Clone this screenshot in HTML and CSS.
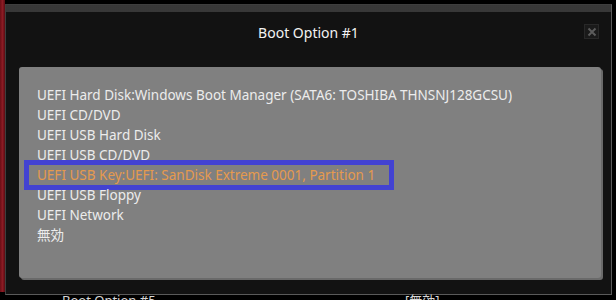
FILE: index.html
```html
<!DOCTYPE html>
<html lang="ja">
<head>
<meta charset="utf-8">
<title>Boot Option #1</title>
<link rel="stylesheet" href="styles.css">
</head>
<body>
<div class="screen">
  <div class="side-strip"></div>
  <div class="stage">
    <div class="dialog">
      <div class="dots"></div>
      <div class="header">
        <span class="spacer"></span>
        <h1 class="title">Boot Option #1</h1>
        <span class="close"><svg width="10" height="10" viewBox="0 0 10 10"><path d="M1.5 1.5L8.5 8.5M8.5 1.5L1.5 8.5" stroke="#5c5c5c" stroke-width="2"/></svg></span>
      </div>
      <div class="panel">
        <div class="item">UEFI Hard Disk:Windows Boot Manager (SATA6: TOSHIBA THNSNJ128GCSU)</div>
        <div class="item">UEFI CD/DVD</div>
        <div class="item">UEFI USB Hard Disk</div>
        <div class="item">UEFI USB CD/DVD</div>
        <div class="item selected"><span class="mark">UEFI USB Key:UEFI: SanDisk Extreme 0001, Partition 1</span></div>
        <div class="item">UEFI USB Floppy</div>
        <div class="item">UEFI Network</div>
        <div class="item">無効</div>
      </div>
    </div>
    <div class="below">
      <span class="below-label">Boot Option #5</span>
      <span class="below-value">[無効]</span>
    </div>
  </div>
</div>
</body>
</html>
```
FILE: styles.css
```css
html, body {
  margin: 0;
  padding: 0;
  background: #000;
  height: 300px;
  overflow: hidden;
}
.screen {
  display: flex;
  height: 300px;
  font-family: "Noto Sans", "Noto Sans CJK JP", sans-serif;
}
.side-strip {
  flex: 0 0 5px;
  height: 292px;
  background: linear-gradient(90deg, #6a0f16 0%, #8c1b24 50%, #5a0c12 100%);
}
.stage {
  flex: 0 0 607px;
  display: flex;
  flex-direction: column;
}
.dialog {
  flex: 0 0 auto;
  margin-top: 4px;
  width: 607px;
  height: 291px;
  box-sizing: border-box;
  border: 1px solid #3e3e3e;
  border-right-color: #5a5a5a;
  border-bottom-color: #5a5a5a;
  background: #121212;
  display: flex;
  flex-direction: column;
}
.dots {
  flex: 0 0 7px;
  background-color: #1c1c1c;
  background-image: radial-gradient(circle, #3a3a3a 0.7px, transparent 0.8px);
  background-size: 2px 2px;
}
.header {
  display: grid;
  grid-template-columns: 1fr auto 1fr;
  align-items: start;
  padding-top: 11px;
}
.title {
  margin: 0;
  font-size: 14px;
  line-height: 20px;
  font-weight: normal;
  color: #f2f2f2;
}
.close {
  justify-self: end;
  margin-right: 12px;
  margin-top: 1px;
  width: 15px;
  height: 15px;
  box-sizing: border-box;
  border: 1px solid #282828;
  background: #1a1a1a;
  display: flex;
  align-items: center;
  justify-content: center;
}
.panel {
  flex: 0 0 auto;
  margin: 24px 10px 0 13px;
  height: 211px;
  box-sizing: border-box;
  background: #808080;
  border-radius: 3px;
  box-shadow: 2px 2px 0 #6a6a6a;
  padding: 18px 0 0 18px;
}
.item {
  font-size: 13.5px;
  line-height: 20px;
  color: #ececec;
  white-space: nowrap;
}
.selected {
  color: #e69a4e;
}
.mark {
  display: inline-block;
  padding: 0 14px 0 8px;
  margin: 0 -14px 0 -8px;
  outline: 5px solid #4242d2;
}
.below {
  flex: 0 0 20px;
  font-size: 13px;
  line-height: 20px;
  color: #d8d8d8;
  margin-top: -5px;
}
.below-label {
  margin-left: 57px;
}
.below-value {
  margin-left: 246px;
}
```
